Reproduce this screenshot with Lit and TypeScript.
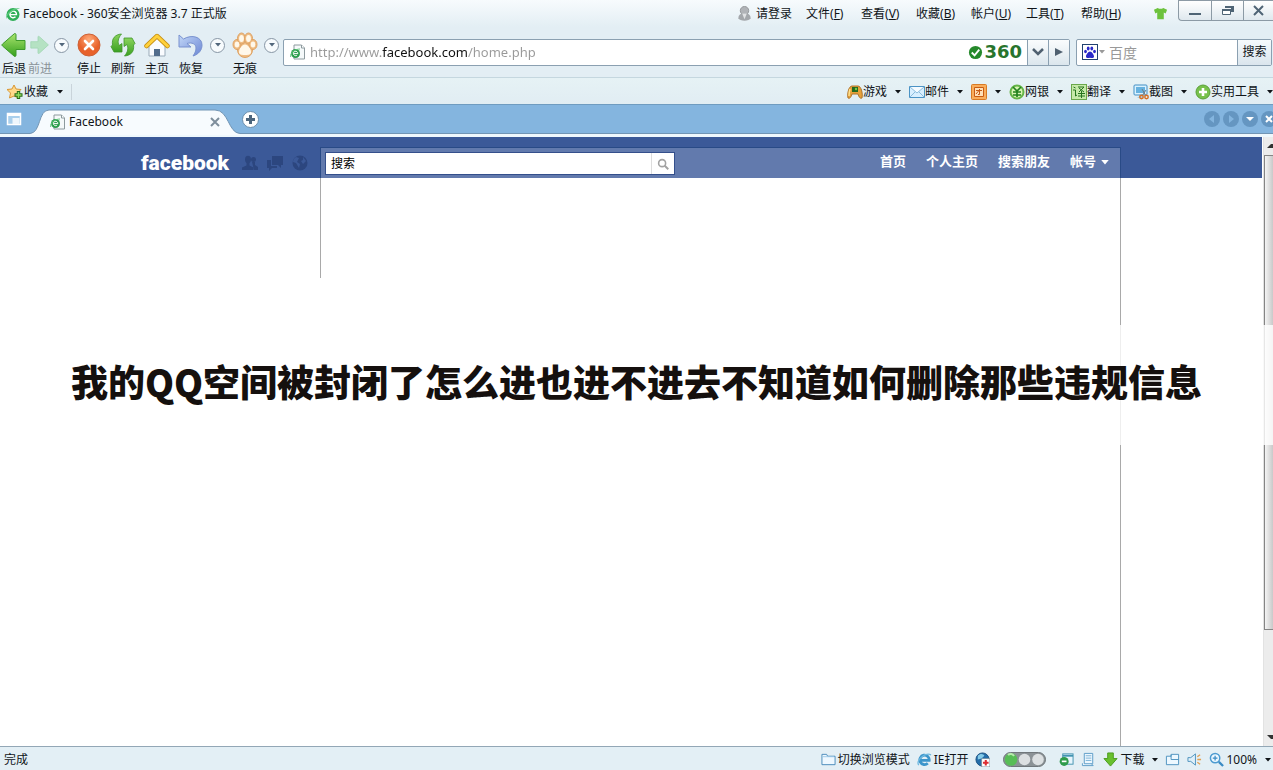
import { LitElement, html, css, svg, nothing, type TemplateResult } from "lit";
import { customElement } from "lit/decorators.js";

const icon = (size: number, body: TemplateResult, box = 16, cls = "") =>
  html`<svg class=${cls} width=${size} height=${size} viewBox="0 0 ${box} ${box}" aria-hidden="true">${body}</svg>`;

const eMark = svg`<circle cx="8" cy="8.5" r="6.500" fill="#2fae57"/>
  <path d="M5 8.600h6.500a3.300 3.300 0 1 0-1 2.200" fill="none" stroke="#fff" stroke-width="1.400"/>
  <path d="M1.500 13C-.5 8 7 1 15 2.500 13 3 11 3.500 9 4.500 5 6.500 2 9 1.500 13z" fill="#56c878"/>`;

const pageMark = svg`<path d="M4 1h7.500l3 3v11H4z" fill="#f5f9fa" stroke="#8d9a9e" stroke-width="1"/>
  <path d="M11.500 1v3h3" fill="#fff" stroke="#8d9a9e"/>
  <circle cx="5.500" cy="9.500" r="4.500" fill="#2a9d4b"/>
  <path d="M3.500 9.600h4.300a2.200 2.200 0 1 0-.7 1.500" fill="none" stroke="#fff" stroke-width="1"/>
  <path d="M.7 13C-.5 9 5 5 10 5" fill="none" stroke="#65c77e"/>`;

const arrowRight = "M1 9h9V3c0-1 1-1 2 0l11 10-11 10c-1 1-2 1-2 0v-6H1z";
const arrowLeft = "M24 8.500H15V3c0-1.500-1-2-2-1L1.500 12c-.7.600-.7 1.400 0 2L13 24c1 1 2 .5 2-1v-5.500h9z";

const tool = {
  back: svg`<defs><linearGradient id="gb" x2="0" y2="1"><stop stop-color="#a9e46e"/><stop offset="1" stop-color="#35a01d"/></linearGradient></defs>
    <path d=${arrowLeft} fill="url(#gb)" stroke="#3d9a2b" stroke-linejoin="round"/>`,
  next: svg`<path d=${arrowRight} transform="translate(3 2.500) scale(.8)" fill="#b5e2c3" stroke="#9fd6b1" stroke-linejoin="round"/>`,
  stop: svg`<defs><radialGradient id="gs" cy=".25"><stop stop-color="#ffab79"/><stop offset="1" stop-color="#e8622b"/></radialGradient></defs>
    <circle cx="13" cy="13" r="11" fill="url(#gs)" stroke="#cc6237"/><path d="m9 9 8 8m0-8-8 8" stroke="#fff" stroke-width="2.600" stroke-linecap="round"/>`,
  refresh: svg`<defs><linearGradient id="gr" x2="0" y2="1"><stop stop-color="#8ad45c"/><stop offset="1" stop-color="#3ba022"/></linearGradient></defs>
    <g fill="url(#gr)" stroke="#3f952a" stroke-width=".8" stroke-linejoin="round"><path d="M11.500 2C5 2.500 1.500 6.500 2.500 13L1 14.500 4 20h8v-8.500l-3 2C7.500 10 8 6 11.500 2z"/>
    <path d="M14.500 24c6.500-.5 10-4.500 9-11l1.500-1.500L22 6h-8v8.500l3-2c1.500 3.500 1 7.500-2.500 11.500z"/></g>`,
  home: svg`<path d="M5 13v11h16V13l-8-7z" fill="#fafcff" stroke="#9aabb9"/><path d="M10 24v-7h6v7z" fill="#526d8c"/>
    <path d="M2.500 14 13 4l10.500 10" fill="none" stroke="#c79116" stroke-width="4.500" stroke-linejoin="round" stroke-linecap="round"/>
    <path d="M2.500 14 13 4l10.500 10" fill="none" stroke="#ffd13c" stroke-width="3" stroke-linejoin="round" stroke-linecap="round"/>`,
  undo: svg`<defs><linearGradient id="gu" x2="1" y2="1"><stop stop-color="#c3d8f8"/><stop offset="1" stop-color="#6b86d4"/></linearGradient></defs>
    <path d="M1 3v12h12l-4-3.500c5-1.500 9 .5 9 4.500 0 3-1 5-3 8 6-2 9-6 9-11C24 5 14 2 5.500 7z" fill="url(#gu)" stroke="#7891cf" stroke-linejoin="round"/>`,
  paw: svg`<g fill="#f0bd83" stroke="#dda265"><circle cx="13" cy="18" r="7.500"/><ellipse cx="5" cy="12.500" rx="4" ry="5"/><ellipse cx="9.500" cy="6.500" rx="4" ry="5.500"/><ellipse cx="16.500" cy="6.500" rx="4" ry="5.500"/><ellipse cx="21" cy="12.500" rx="4" ry="5"/></g>
    <g fill="#fff8ea"><path d="M13 12.500c3 0 6 4.500 6 7.500s-3.500 3-6 3-6 0-6-3 3-7.500 6-7.500z"/><ellipse cx="5" cy="12.500" rx="2.300" ry="3"/><ellipse cx="9.500" cy="6.500" rx="2.400" ry="3.500"/><ellipse cx="16.500" cy="6.500" rx="2.400" ry="3.500"/><ellipse cx="21" cy="12.500" rx="2.300" ry="3"/></g>`,
};

const small = {
  user: svg`<circle cx="8" cy="5" r="4.500" fill="#b0b3b7" stroke="#929599"/><path d="M1.500 13c0-4 3-5.500 6.500-5.500s6.500 1.500 6.500 5.500c-1 3.500-12 3.500-13 0z" fill="#a3a7ab"/><path d="M5.500 8h5L8 14z" fill="#e0e2e4"/>`,
  shirt: svg`<path d="m1 4 4-2q3 2 6 0l4 2-1.500 4-2-1v7h-7V7l-2 1z" fill="#6cc23c"/>`,
  star: svg`<path d="m7 1 2 4 5 .5-3.500 3.500 1 5L7 12l-4.500 2 1-5L0 5.500 5 5z" fill="#ffd98a" stroke="#d99733" stroke-linejoin="round"/><path d="M11.500 7v8m-4-4h8" stroke="#276b16" stroke-width="3.400"/><path d="M11.500 8v6m-3-3h6" stroke="#92dd5e" stroke-width="1.500"/>`,
  game: svg`<path d="M1 14C0 9 2 2 5 2h6c3 0 5 7 4 12-2 1-3-1-4-4H5c-1 3-2 5-4 4z" fill="#e6a13a" stroke="#b0742a"/><path d="M5 3h6v5H5z" fill="#236920"/><path d="M3 5c-1 3-1 5-1 7" stroke="#ffe18c" fill="none" stroke-width="1.500"/><circle cx="9" cy="5" r="1.200" fill="#7ccb42"/>`,
  mail: svg`<path d="M.5 2.500h15v11H.5z" fill="#d8efff" stroke="#4b93c5"/><path d="m1 3 7 6 7-6M1 13l5-5m9 5-5-5" fill="#f5fbff" stroke="#8bbcdc"/>`,
  tuan: svg`<rect x=".5" y=".5" width="15" height="15" rx="1" fill="#f9ad5c" stroke="#d87b24"/><path d="M3.500 3.500h9v9h-9z" fill="#ffe0b8" stroke="#c85c13"/><path d="M5 6.500h6M8.500 5v5.500H7m1-4-3 3.500" fill="none" stroke="#c85c13"/>`,
  bank: svg`<circle cx="8" cy="8" r="6.500" fill="#d8f4b2" stroke="#65b447" stroke-width="2"/><path d="m4 3 4 4 4-4M8 7v6M4 8h8m-8 3h8" fill="none" stroke="#23811e" stroke-width="1.700"/>`,
  yi: svg`<rect x=".5" y=".5" width="15" height="15" fill="#c6e9a9" stroke="#6aa74b"/><path d="m2.500 3 2 1M2 6h2.500v6L6 11M7 3h6L8 8m0-4 5 4M7 9.500h7m-7 2.500h7M10.500 7v7" fill="none" stroke="#25731d"/>`,
  snap: svg`<rect x="1" y="1" width="13" height="10" rx="1" fill="#d9f2ff" stroke="#438fc4"/><path d="M3 3h9v6H3z" fill="#67b2df"/><path d="M4 14h6l-2-3" fill="#9fcbe5"/><path d="m9 5 4 7m0-6-4 6" stroke="#6e7c85"/><g fill="none" stroke="#d66f23" stroke-width="1.500"><circle cx="8.500" cy="13" r="1.700"/><circle cx="13.500" cy="13" r="1.700"/></g>`,
  plus: svg`<circle cx="8" cy="8" r="7" fill="#77c14b" stroke="#5aa038"/><path d="M8 4v8M4 8h8" stroke="#fff" stroke-width="2.600"/>`,
  panel: svg`<rect x="1.500" y="2.500" width="13" height="11" fill="#a9cfec" stroke="#fff" stroke-width="1.500"/><path d="M2 4h12" stroke="#fff" stroke-width="2"/><path d="M6.500 7h7v6h-7z" fill="#eff7fd"/>`,
  folder: svg`<path d="M1 13.500v-11h5l1 2h8v9z" fill="#eef8ff" stroke="#4789ba"/><path d="M2 5h12" stroke="#9cc9e6"/>`,
  ie: svg`<path d="M3 9h10a5 5 0 1 0-1.500 3" fill="none" stroke="#3c95cb" stroke-width="3"/><path d="M2 14C-2 10 8 0 15 3" fill="none" stroke="#6eb9df" stroke-width="1.400"/>`,
  globe: svg`<circle cx="8" cy="8" r="7" fill="#246da9" stroke="#1c5384"/><path d="M3 4c3-3 6-2 7 0L7 7 3 8z" fill="#85cbe8"/><rect x="7" y="7" width="9" height="9" rx="1" fill="#fff" stroke="#7890a0"/><path d="M11.500 8.500v6m-3-3h6" stroke="#dc2b32" stroke-width="2.200"/>`,
  block: svg`<rect x="4" y="2" width="11" height="11" fill="#e6f5fd" stroke="#4293b0"/><path d="M4 4h11" stroke="#4293b0" stroke-width="2"/><circle cx="5.500" cy="10" r="4.800" fill="#2e9b4b"/><path d="M3 10h5" stroke="#fff" stroke-width="1.800"/>`,
  doc: svg`<path d="M3.500 1.500h9v11h-9zM1.500 12v2.500H13l-2-2" fill="#edf7fe" stroke="#5a9bc6"/><path d="M5 4h6M5 6.500h6M5 9h6" stroke="#76b0d4"/>`,
  down: svg`<path d="M5 1h6v6h4l-7 8-7-8h4z" fill="#69c02f" stroke="#499a1c"/>`,
  windows: svg`<path d="M1.500 4.500h5v-2h8v11h-13z" fill="#edf8ff" stroke="#4c91be"/><path d="M6.500 3v5h8" fill="none" stroke="#4c91be"/>`,
  sound: svg`<path d="M1 6h3l5-4v12L4 10H1z" fill="#dff0fa" stroke="#4b91bd"/><path d="m11 5 3-2m-3 5h4m-4 3 3 2" stroke="#e2a050" stroke-width="1.400"/>`,
  zoom: svg`<circle cx="6.500" cy="6.500" r="5" fill="#edf8ff" stroke="#4d9bd0" stroke-width="1.600"/><path d="m10.500 10.500 4.500 4.500" stroke="#398bc5" stroke-width="2.400"/><path d="M6.500 4v5M4 6.500h5" stroke="#398bc5" stroke-width="1.300"/>`,
  lens: svg`<circle cx="7" cy="7" r="4" fill="none" stroke="#a2a2a2" stroke-width="1.800"/><path d="m10 10 4 4" stroke="#a2a2a2" stroke-width="2.200"/>`,
  check: svg`<circle cx="8" cy="8" r="7" fill="#25892b"/><path d="m4 8 3 3 5-6" fill="none" stroke="#fff" stroke-width="2"/>`,
  baidu: svg`<rect x=".5" y=".5" width="15" height="15" fill="#fff" stroke="#20416f"/><g fill="#2929c8"><path d="M8 7.500c2 0 4 3.500 4 5s-2 2-4 1.200C6 14.500 4 14 4 12.500s2-5 4-5z"/><ellipse cx="3.500" cy="7.500" rx="1.400" ry="1.800"/><ellipse cx="6.200" cy="4.500" rx="1.400" ry="2"/><ellipse cx="9.800" cy="4.500" rx="1.400" ry="2"/><ellipse cx="12.500" cy="7.500" rx="1.400" ry="1.800"/></g>`,
  friends: svg`<g fill="#2c467f"><circle cx="11.500" cy="4.500" r="2.500"/><path d="M10 7h3v3l3 2v3h-4z"/><ellipse cx="6" cy="4.500" rx="3" ry="3.700"/><path d="M4.500 7h3v3.500l4 2V15H0v-2.500l4.500-2z"/></g>`,
  chat: svg`<path d="M5 1h11v9h-2v3l-3-3H5z" fill="#2c467f"/><path d="M0 5h4v6h6v2H5l-3 3v-3H0z" fill="#2c467f"/>`,
  world: svg`<circle cx="8" cy="8" r="7.500" fill="#2c467f"/><path d="m4 2 3 1-2 4 3 2-1 4-3-5-3-1c0-2 1-4 3-5zm7 0 3 4-3 3-2-3 2-1z" fill="#3b5998"/>`,
};

const caret = html`<svg class="caret" width="6" height="4" viewBox="0 0 6 4" aria-hidden="true"><path d="M0 0h6L3 3.500z" fill="currentColor"/></svg>`;

const menus: [string, string][] = [["文件", "F"], ["查看", "V"], ["收藏", "B"], ["帐户", "U"], ["工具", "T"], ["帮助", "H"]];
const plugins: [string, TemplateResult, string][] = [
  ["游戏", small.game, ""], ["邮件", small.mail, ""], ["", small.tuan, "团购"], ["网银", small.bank, ""],
  ["翻译", small.yi, ""], ["截图", small.snap, ""], ["实用工具", small.plus, ""],
];

@customElement("app-root")
export class AppRoot extends LitElement {
  static styles = css`
    :host { display: grid; grid-template-rows: 27px 51px 26px 33px 1fr 24px; position: relative; height: 100vh; overflow: hidden;
      font: 12px/16px "Noto Sans", "Noto Sans CJK SC", sans-serif; color: #101418; background: #fff; }
    * { box-sizing: border-box; }
    button, input { font: inherit; color: inherit; margin: 0; padding: 0; border: 0; background: none; border-radius: 0; }
    button, a { white-space: nowrap; flex: none; }
    input { min-width: 0; outline: 0; }
    svg { display: block; flex: none; }
    form { margin: 0; }
    .titlebar, .toolbar, .favbar, .tabs, .status { display: flex; align-items: center; min-width: 0; }
    .titlebar { background: linear-gradient(#f7fbfd, #e3eef4); padding-left: 5px; }
    .title { display: flex; align-items: center; gap: 2px; }
    .menus { display: flex; align-items: center; gap: 14px; margin-left: auto; }
    .menus button { min-width: 41px; text-align: left; }
    .menus .login { display: flex; align-items: center; gap: 4px; }
    .skin { margin: 0 10px 0 31px; }
    .window { display: flex; align-self: flex-start; height: 21px; border: 1px solid #8c9aa5; border-right: 0; border-radius: 0 0 0 4px;
      background: linear-gradient(#fff, #dfe8ee); }
    .window button { width: 32px; display: grid; place-items: center; }
    .window button + button { border-left: 1px solid #8c9aa5; }
    .window button:last-child { width: 30px; }
    .toolbar { background: #e3eef4; border-bottom: 1px solid #c5d7df; padding: 0 1px 0 2px; }
    .tool { width: 24px; display: flex; flex-direction: column; align-items: center; gap: 3px; }
    .nav, .tools { display: flex; align-items: flex-start; padding-top: 4px; }
    .nav { gap: 2px; }
    .tools { gap: 10px; margin-left: 8px; }
    .dim { color: #8b9499; }
    .round { width: 15px; height: 15px; border: 1px solid #8796a5; border-radius: 50%; display: grid; place-items: center; color: #52677c;
      background: #f7fbfd; margin-top: 6px; }
    .tools .after { margin: 6px -2px 0 -3px; }
    .address { flex: 1; display: flex; align-items: center; margin-left: 6px; height: 27px; border: 1px solid #8ba0b1; border-radius: 2px; background: #fff; padding-left: 6px; }
    .address input { flex: 1; height: 24px; margin-left: 4px; font-size: 13px; color: transparent;
      background: linear-gradient(90deg, #999 72px, #111 72px 157px, #999 157px); -webkit-background-clip: text; background-clip: text; }
    .brand { display: flex; align-items: center; gap: 1px; color: #28742d; font: bold 18px/20px "DejaVu Sans", sans-serif; margin-right: 5px; }
    .side { width: 21px; height: 25px; border-left: 1px solid #8ba0b1; background: linear-gradient(#fafcfd, #dbe6ed); display: grid; place-items: center; }
    .search { display: flex; align-items: center; width: 196px; height: 27px; margin-left: 6px; border: 1px solid #8ba0b1; border-radius: 2px; background: #fff; padding-left: 5px; }
    .search input { flex: 1; height: 24px; padding-left: 4px; font-size: 14px; color: #999; }
    .search .pick { display: flex; align-items: center; gap: 1px; color: #999; }
    .search .go { width: 34px; height: 25px; border-left: 1px solid #8ba0b1; background: linear-gradient(#f6fafc, #dae5ed); }
    .favbar { background: linear-gradient(#e6f2f5, #e1edf3); padding: 2px 0 0 7px; }
    .fav { display: flex; align-items: center; gap: 1px; padding-right: 8px; border-right: 1px solid #c9d4da; }
    .fav .caret, .plugins .caret { margin-left: 8px; }
    .plugins { display: flex; gap: 8px; margin-left: auto; }
    .plugins button, .status button { display: flex; align-items: center; }
    .tabs { background: #84b5df; border-top: 1px solid #6f9cc0; box-shadow: inset 0 -3px #eff8fd, inset 0 -4px #7295b4; padding: 0 0 4px 6px; }
    .tab { align-self: stretch; display: flex; align-items: center; width: 210px; margin-left: 8px; position: relative; padding: 5px 20px 0 20px; }
    .tab .shape { position: absolute; left: 0; top: 4px; width: 100%; height: 26px; }
    .tab .label { position: relative; margin-left: 3px; }
    .tab .mark { position: relative; }
    .tab .close { position: relative; margin-left: auto; }
    .add { margin-left: 2px; width: 17px; height: 17px; border-radius: 50%; background: #fff; border: 1px solid #6b8fae; display: grid; place-items: center; }
    .tabnav { display: flex; gap: 3px; margin: 0 -4px 0 auto; }
    .tabnav button { width: 16px; height: 16px; border-radius: 50%; background: #6596c1; color: #fff; display: grid; place-items: center; }
    .tabnav .off { color: #84b5df; }
    .view { display: grid; grid-template-columns: 1fr 10px; min-height: 0; }
    .page { display: flex; flex-direction: column; min-width: 0; margin-right: 1px; }
    .fbbar { background: #3b5998; height: 41px; }
    .frame { width: 980px; max-width: 100%; margin: 0 auto; display: flex; }
    .fbbar .frame { height: 41px; padding-top: 10px; }
    .left { width: 179px; flex: none; display: flex; align-items: center; gap: 9px; }
    .logo { color: #fff; font: 900 21px/28px Roboto, sans-serif; text-decoration: none; margin-right: 4px; }
    .fbmain { flex: 1; display: flex; align-items: flex-start; border: 1px solid #294a86; border-bottom: 0; background: #627aad; padding: 4px 11px 0 4px; }
    .fbsearch { display: flex; align-items: center; width: 350px; height: 23px; background: #fff; border: 1px solid #344f8b; }
    .fbsearch input { flex: 1; padding-left: 5px; color: #000; }
    .fbsearch input::placeholder { color: #000; opacity: 1; }
    .fbsearch button { width: 23px; height: 21px; border-left: 1px solid #ddd; display: grid; place-items: center; }
    .fbnav { display: flex; gap: 20px; margin-left: auto; padding-top: 1px; }
    .fbnav a { color: #fff; font-weight: bold; text-decoration: none; font-size: 13px; }
    .fbnav .caret { display: inline-block; vertical-align: middle; width: 8px; height: 5px; margin-left: 5px; }
    .body { flex: 1; padding-left: 179px; }
    .column { flex: 1; border-right: 1px solid #a9a9a9; }
    .stub { height: 100px; border-left: 1px solid #a9a9a9; }
    .scroll { display: grid; grid-template-rows: 18px 475px 1fr 18px; background: #ececec; border-left: 1px solid #e2e2e2; }
    .scroll svg { place-self: center end; }
    .thumb { border: 1px solid #858585; border-right: 0; background: linear-gradient(90deg, #f4f4f4, #c9c9c9); }
    .banner { position: absolute; inset: 0; display: flex; align-items: center; pointer-events: none; }
    .banner h1 { flex: 1; height: 120px; margin: 0; background: rgba(255, 255, 255, .8); color: #15100e; text-align: center; white-space: nowrap;
      font: 900 37px/112px "Noto Sans CJK SC", sans-serif; }
    .status { background: #e3eff5; border-top: 1px solid #93a7b6; padding: 2px 2px 0 4px; }
    .right { display: flex; align-items: center; gap: 7px; margin-left: auto; }
    .right button { gap: 2px; }
    .right .caret { margin-left: 6px; }
    .lights { margin: 0 6px; }
  `;

  private tool(label: string, art: TemplateResult, cls = "") {
    return html`<button class="tool ${cls}">${icon(26, art, 26)}<span>${label}</span></button>`;
  }

  private st(art: TemplateResult, label: string, text = "", arrow = false) {
    return html`<button aria-label=${label}>${icon(15, art)}${text ? html`<span>${text}</span>` : nothing}${arrow ? caret : nothing}</button>`;
  }

  render() {
    return html`
      <header class="titlebar">
        <div class="title">${icon(16, eMark)}<span>Facebook - 360安全浏览器 3.7 正式版</span></div>
        <nav class="menus">
          <button class="login">${icon(15, small.user)}请登录</button>
          ${menus.map(([n, k]) => html`<button>${n}(<u>${k}</u>)</button>`)}
        </nav>
        <button class="skin" aria-label="皮肤">${icon(15, small.shirt)}</button>
        <div class="window">
          <button aria-label="最小化"><svg width="12" height="12"><path d="M0 9h12" stroke="#4f6475" stroke-width="2"/></svg></button>
          <button aria-label="还原"><svg width="12" height="12"><path d="M3 1h9v6H9V3H3z" fill="#4f6475"/><path d="M.5 4.500h8v5h-8z" fill="#fff" stroke="#4f6475"/><path d="M0 5h9" stroke="#4f6475" stroke-width="2"/></svg></button>
          <button aria-label="关闭"><svg width="12" height="12"><path d="m1 1 9 9m0-9-9 9" stroke="#4f6475" stroke-width="2"/></svg></button>
        </div>
      </header>
      <div class="toolbar">
        <div class="nav">${this.tool("后退", tool.back)}${this.tool("前进", tool.next, "dim")}<button class="round" aria-label="历史">${caret}</button></div>
        <div class="tools">
          ${this.tool("停止", tool.stop)}${this.tool("刷新", tool.refresh)}${this.tool("主页", tool.home)}${this.tool("恢复", tool.undo)}
          <button class="round after" aria-label="恢复列表">${caret}</button>
          ${this.tool("无痕", tool.paw)}
          <button class="round after" aria-label="无痕选项">${caret}</button>
        </div>
        <div class="address">${icon(16, pageMark)}
          <input aria-label="地址" .value=${"http://www.facebook.com/home.php"} />
          <span class="brand">${icon(15, small.check)}360</span>
          <button class="side" aria-label="展开"><svg width="12" height="8"><path d="m1 1 5 5 5-5" fill="none" stroke="#4f6070" stroke-width="2.500"/></svg></button>
          <button class="side" aria-label="转到"><svg width="8" height="10"><path d="M0 1l8 4-8 4z" fill="#4f6070"/></svg></button>
        </div>
        <form class="search" @submit=${(e: Event) => e.preventDefault()}>
          <button type="button" class="pick" aria-label="搜索引擎">${icon(16, small.baidu)}${caret}</button>
          <input aria-label="百度" .value=${"百度"} />
          <button class="go">搜索</button>
        </form>
      </div>
      <div class="favbar">
        <button class="fav">${icon(16, small.star)}收藏${caret}</button>
        <div class="plugins">${plugins.map(([t, art, name]) => html`<button aria-label=${t || name}>${icon(16, art)}${t ? html`<span>${t}</span>` : nothing}${caret}</button>`)}</div>
      </div>
      <div class="tabs">
        <button aria-label="侧栏">${icon(16, small.panel)}</button>
        <div class="tab">
          <svg class="shape" viewBox="0 0 210 26" preserveAspectRatio="none"><path d="M0 24.500C11 24 8 1 19 1h166c14 0 13 23 25 23.500V27H0z" fill="#f7fbfe"/><path d="M0 24.500C11 24 8 1 19 1h166c14 0 13 23 25 23.500" fill="none" stroke="#7295b4"/></svg>
          ${icon(16, pageMark, 16, "mark")}
          <span class="label">Facebook</span>
          <button class="close" aria-label="关闭标签"><svg width="10" height="10"><path d="m1 1 8 8m0-8-8 8" stroke="#7e8e9c" stroke-width="2"/></svg></button>
        </div>
        <button class="add" aria-label="新建标签"><svg width="9" height="9"><path d="M4.500 0v9M0 4.500h9" stroke="#4c657c" stroke-width="3"/></svg></button>
        <div class="tabnav">
          <button class="off" aria-label="上一个"><svg width="8" height="8"><path d="M6 0v8L1 4z" fill="currentColor"/></svg></button>
          <button class="off" aria-label="下一个"><svg width="8" height="8"><path d="M2 0v8l5-4z" fill="currentColor"/></svg></button>
          <button aria-label="标签列表"><svg width="8" height="8"><path d="M0 2h8L4 6z" fill="currentColor"/></svg></button>
          <button aria-label="关闭全部"><svg width="8" height="8"><path d="m1 1 6 6m0-6-6 6" stroke="currentColor" stroke-width="2"/></svg></button>
        </div>
      </div>
      <main class="view">
        <div class="page">
          <div class="fbbar"><div class="frame">
            <div class="left"><a class="logo" href="#">facebook</a>${icon(16, small.friends)}${icon(16, small.chat)}${icon(16, small.world)}</div>
            <div class="fbmain">
              <form class="fbsearch" @submit=${(e: Event) => e.preventDefault()}>
                <input aria-label="搜索" placeholder="搜索" /><button aria-label="搜索">${icon(14, small.lens)}</button>
              </form>
              <nav class="fbnav"><a href="#">首页</a><a href="#">个人主页</a><a href="#">搜索朋友</a><a href="#">帐号${caret}</a></nav>
            </div>
          </div></div>
          <div class="frame body"><div class="column"><div class="stub"></div></div></div>
        </div>
        <div class="scroll" aria-hidden="true">
          <svg width="6" height="4"><path d="M0 4 4 0h2v4z" fill="#333"/></svg><div class="thumb"></div><span></span>
          <svg width="6" height="4"><path d="m0 0 4 4h2V0z" fill="#333"/></svg>
        </div>
      </main>
      <footer class="status">
        <span>完成</span>
        <div class="right">
          ${this.st(small.folder, "切换浏览模式", "切换浏览模式")}${this.st(small.ie, "IE打开", "IE打开")}${this.st(small.globe, "网络")}
          <svg class="lights" width="43" height="15"><rect x=".5" y=".5" width="42" height="14" rx="7" fill="#8b9296" stroke="#70777b"/><circle cx="8" cy="7.500" r="6.300" fill="#57bd56"/><path d="M5 3c2-2 5-1 6 1" stroke="#b7ebad" stroke-width="2" fill="none"/><circle cx="21.500" cy="7.500" r="5.800" fill="#dce0e2"/><circle cx="35" cy="7.500" r="5.800" fill="#dce0e2"/></svg>
          ${this.st(small.block, "拦截")}${this.st(small.doc, "页面")}${this.st(small.down, "下载", "下载", true)}${this.st(small.windows, "窗口")}${this.st(small.sound, "声音")}${this.st(small.zoom, "缩放", "100%", true)}
        </div>
      </footer>
      <div class="banner"><h1>我的QQ空间被封闭了怎么进也进不进去不知道如何删除那些违规信息</h1></div>
    `;
  }
}
